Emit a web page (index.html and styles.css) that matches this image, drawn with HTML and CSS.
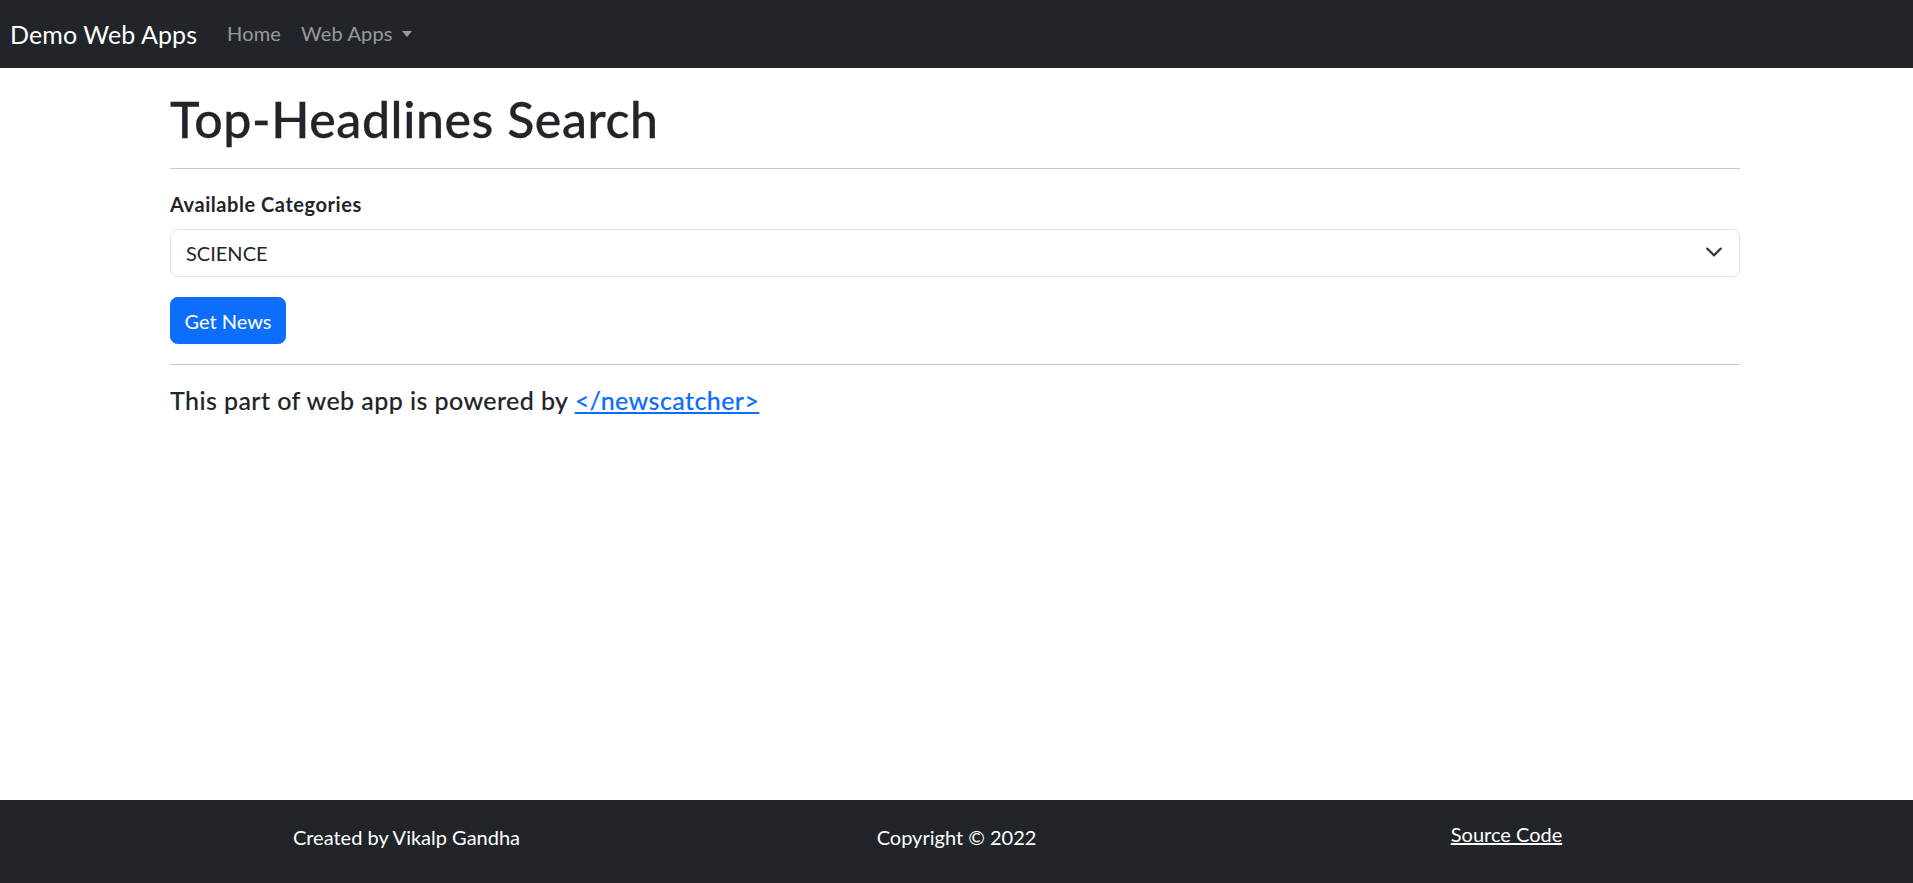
FILE: index.html
```html
<!DOCTYPE html>
<html lang="en">
<head>
<meta charset="utf-8">
<title>Top-Headlines Search</title>
<link rel="stylesheet" href="styles.css">
</head>
<body>
<nav class="navbar">
  <a class="brand" href="#">Demo Web Apps</a>
  <ul class="nav">
    <li><a class="nav-link" href="#">Home</a></li>
    <li><a class="nav-link dropdown" href="#">Web Apps<span class="caret"></span></a></li>
  </ul>
</nav>
<main class="page">
  <div class="content">
    <h1 class="title">Top-Headlines Search</h1>
    <hr class="rule">
    <form class="search">
      <label class="label" for="cat">Available Categories</label>
      <div class="select-wrap">
        <select id="cat" class="select">
          <option>SCIENCE</option>
        </select>
        <svg class="chevron" viewBox="0 0 16 16" width="18" height="18" aria-hidden="true"><path d="m2 5 6 6 6-6" fill="none" stroke="#343a40" stroke-width="1.9" stroke-linecap="round" stroke-linejoin="round"/></svg>
      </div>
      <button type="button" class="btn">Get News</button>
    </form>
    <hr class="rule">
    <h5 class="powered">This part of web app is powered by <a href="#" class="link">&lt;/newscatcher&gt;</a></h5>
  </div>
</main>
<footer class="footer">
  <div class="footer-row">
    <div class="footer-col">Created by Vikalp Gandha</div>
    <div class="footer-col">Copyright &copy; 2022</div>
    <div class="footer-col footer-link-col"><a href="#" class="footer-link">Source Code</a></div>
  </div>
</footer>
</body>
</html>
```
FILE: styles.css
```css
* { box-sizing: border-box; }
html, body { height: 100%; }
body {
  margin: 0;
  font-family: "Segoe UI", Lato, "Noto Sans", sans-serif;
  font-size: 20px;
  line-height: 30px;
  color: #212529;
  background: #fff;
  display: flex;
  flex-direction: column;
}
.navbar {
  height: 68px;
  background: #212529;
  display: flex;
  align-items: center;
  padding: 0 10px;
  flex-shrink: 0;
}
.brand {
  color: #fff;
  font-size: 25px;
  line-height: 30px;
  text-decoration: none;
  margin-right: 20px;
  letter-spacing: 0.1px;
}
.nav {
  list-style: none;
  margin: 0;
  padding: 0;
  display: flex;
}
.nav-link {
  display: block;
  padding: 6px 10px 8px;
  color: rgba(255,255,255,.55);
  text-decoration: none;
  letter-spacing: 0.15px;
}
.caret {
  display: inline-block;
  margin-left: 9px;
  vertical-align: 4px;
  border-top: 6px solid rgba(255,255,255,.55);
  border-left: 5.5px solid transparent;
  border-right: 5.5px solid transparent;
}
.page { flex: 1; }
.content {
  width: 1570px;
  margin-left: 170px;
}
.title {
  margin: 22px 0 0;
  font-size: 50px;
  line-height: 58px;
  font-weight: 500;
  letter-spacing: 0.6px;
  -webkit-text-stroke: 0.3px #212529;
}
.rule {
  margin: 20px 0;
  border: 0;
  border-top: 1px solid #c8c9ca;
  height: 0;
}
.search { display: flex; flex-direction: column; align-items: flex-start; }
.label {
  font-weight: 700;
  margin-bottom: 10px;
  letter-spacing: 0.55px;
}
.select-wrap {
  position: relative;
  width: 100%;
  margin-bottom: 20px;
}
.select {
  display: block;
  width: 100%;
  height: 48px;
  appearance: none;
  -webkit-appearance: none;
  border: 1px solid #dee2e6;
  border-radius: 7.5px;
  background: #fff;
  padding: 0 50px 0 15px;
  font: inherit;
  color: #212529;
}
.chevron {
  position: absolute;
  right: 17px;
  top: 14px;
  pointer-events: none;
}
.btn {
  font: inherit;
  color: #fff;
  background: #0d6efd;
  border: 1px solid #0d6efd;
  border-radius: 7.5px;
  padding: 7.5px 13.5px;
  line-height: 30px;
  height: 47px;
  cursor: pointer;
}
.powered {
  margin: 0;
  font-size: 25px;
  line-height: 30px;
  font-weight: 500;
  letter-spacing: 0.42px;
  -webkit-text-stroke: 0.12px currentColor;
}
.link { color: #0d6efd; }
.footer {
  height: 83px;
  background: #212529;
  color: #fff;
  flex-shrink: 0;
  padding-top: 22px;
}
.footer-row {
  width: 1650px;
  margin: 0 auto;
  display: grid;
  grid-template-columns: repeat(3, 1fr);
}
.footer-col { text-align: center; }
.footer-link-col { margin-top: -3px; }
.footer-link { color: #fff; }
```
